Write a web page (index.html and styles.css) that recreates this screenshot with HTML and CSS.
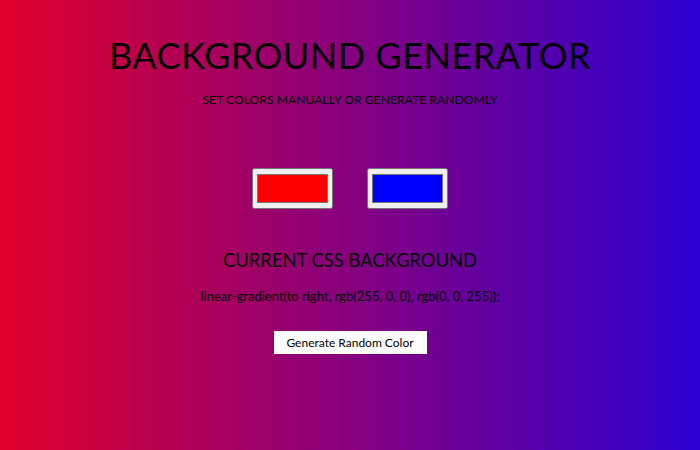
FILE: index.html
```html
<!DOCTYPE html>
<html>
<head>
<meta charset="utf-8">
<link rel="stylesheet" href="styles.css">
</head>
<body class="page">
  <h1 class="title">BACKGROUND GENERATOR</h1>
  <h2 class="subtitle">SET COLORS MANUALLY OR GENERATE RANDOMLY</h2>
  <div class="pickers">
    <input class="color1" type="color" name="color1" value="#ff0000">
    <input class="color2" type="color" name="color2" value="#0000ff">
  </div>
  <h2 class="current">CURRENT CSS BACKGROUND</h2>
  <h3 class="css-text">linear-gradient(to right, rgb(255, 0, 0), rgb(0, 0, 255));</h3>
  <button class="random">Generate Random Color</button>
</body>
</html>
```
FILE: styles.css
```css
html, body {
  margin: 0;
  height: 100%;
}
.page {
  background: linear-gradient(to right, rgb(225, 0, 42), rgb(44, 0, 210));
  font-family: "Lato", sans-serif;
  color: #000;
  text-align: center;
  display: flex;
  flex-direction: column;
  align-items: center;
}
.title {
  font-weight: 400;
  font-size: 36px;
  letter-spacing: 0.5px;
  margin: 32px 0 0;
  line-height: 46px;
}
.subtitle {
  font-weight: 400;
  font-size: 12.2px;
  margin: 14px 0 0;
  line-height: 16px;
}
.pickers {
  display: flex;
  gap: 34px;
  margin-top: 60px;
}
.pickers input {
  width: 81px;
  height: 41px;
  margin: 0;
}
.current {
  font-weight: 400;
  font-size: 18.4px;
  margin: 39px 0 0;
  line-height: 24px;
}
.css-text {
  font-weight: 400;
  font-size: 13px;
  margin: 15px 0 0;
  line-height: 18px;
}
.random {
  margin-top: 26px;
  width: 153px;
  height: 23px;
  background: #fff;
  border: none;
  font-family: "Lato", sans-serif;
  font-size: 12px;
  color: #000;
}
```
